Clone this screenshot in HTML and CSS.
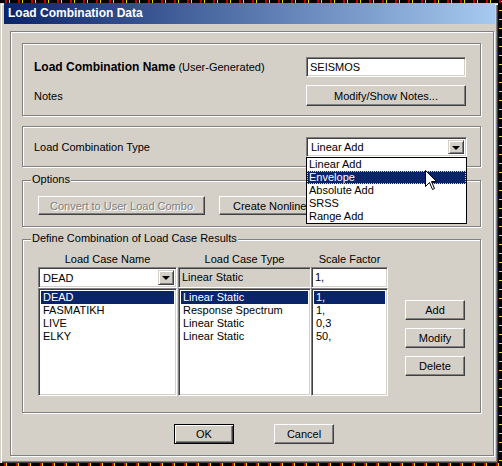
FILE: index.html
```html
<!DOCTYPE html>
<html lang="en">
<head>
  <meta charset="UTF-8" />
  <title>Load Combination Data</title>
  <link rel="stylesheet" href="styles.css">
</head>
<body>

  <div class="window">
    <div class="titlebar">Load Combination Data</div>

    <div class="frame">

      <!-- Nom et notes -->
      <div class="group group-name">
        <div class="row">
          <span><b class="big">Load Combination Name</b> (User-Generated)</span>
          <div class="textbox name-box">SEISMOS</div>
        </div>
        <div class="row row-notes">
          <span>Notes</span>
          <div class="btn notes-btn">Modify/Show Notes...</div>
        </div>
      </div>

      <!-- Type de combinaison (liste ouverte) -->
      <div class="group group-type">
        <span>Load Combination Type</span>
        <div class="combo type-combo">
          <span class="combo-text">Linear Add</span>
          <span class="combo-arrow"></span>
          <ul class="dropdown">
            <li>Linear Add</li>
            <li class="selected focus">Envelope</li>
            <li>Absolute Add</li>
            <li>SRSS</li>
            <li>Range Add</li>
            <svg class="cursor" width="12" height="20" viewBox="0 0 12 20">
              <path d="M0.5 0.5 L0.5 16.5 L4.5 12.5 L7.5 19.5 L9.5 18.5 L6.5 11.5 L11.5 11.5 Z" fill="#fff" stroke="#000" stroke-width="1"/>
            </svg>
          </ul>
        </div>
      </div>

      <!-- Options -->
      <div class="group group-options">
        <span class="legend">Options</span>
        <div class="btn wide-btn disabled">Convert to User Load Combo</div>
        <!-- la suite du texte est cachee par la liste ouverte -->
        <div class="btn wide-btn covered-btn">Create Nonline</div>
      </div>

      <!-- Cas de charge -->
      <div class="group group-define">
        <span class="legend">Define Combination of Load Case Results</span>

        <div class="col col-name">
          <div class="col-head">Load Case Name</div>
          <div class="combo case-combo">
            <span class="combo-text">DEAD</span>
            <span class="combo-arrow"></span>
          </div>
          <ul class="listbox">
            <li class="selected">DEAD</li>
            <li>FASMATIKH</li>
            <li>LIVE</li>
            <li>ELKY</li>
          </ul>
        </div>

        <div class="col col-type">
          <div class="col-head">Load Case Type</div>
          <div class="textbox readonly">Linear Static</div>
          <ul class="listbox">
            <li class="selected">Linear Static</li>
            <li>Response Spectrum</li>
            <li>Linear Static</li>
            <li>Linear Static</li>
          </ul>
        </div>

        <div class="col col-scale">
          <div class="col-head">Scale Factor</div>
          <div class="textbox">1,</div>
          <ul class="listbox">
            <li class="selected">1,</li>
            <li>1,</li>
            <li>0,3</li>
            <li>50,</li>
          </ul>
        </div>

        <div class="side-buttons">
          <div class="btn side-btn">Add</div>
          <div class="btn side-btn">Modify</div>
          <div class="btn side-btn">Delete</div>
        </div>
      </div>

      <!-- Boutons du bas -->
      <div class="footer">
        <div class="btn footer-btn default">OK</div>
        <div class="btn footer-btn">Cancel</div>
      </div>

    </div>
  </div>

</body>
</html>
```

FILE: styles.css
```css
/* Fond noir avec des points comme sur la capture */
body {
  margin: 0;
  width: 502px;
  height: 466px;
  overflow: hidden;
  font-family: "Liberation Sans", Arial, sans-serif;
  font-size: 11px;
  color: #000;
  background-color: #000;
  background-image:
    repeating-linear-gradient(90deg, transparent 0 5px, #c00000 5px 7px, transparent 7px 9px, #e8d800 9px 10px, transparent 10px 13px),
    repeating-linear-gradient(0deg, transparent 0 5px, #e8d800 5px 6px, transparent 6px 9px),
    repeating-linear-gradient(90deg, transparent 0 4px, #c00000 4px 6px, #e8d800 6px 7px, transparent 7px 12px);
  background-size: 100% 3px, 3px 100%, 100% 3px;
  background-position: 0 0, 499px 0, 0 463px;
  background-repeat: no-repeat;
}

ul {
  margin: 0;
  padding: 0;
  list-style: none;
}

.window {
  margin-top: 3px;
  width: 498px;
  height: 460px;
  box-sizing: border-box;
  padding: 0 3px 4px 4px;
  background: #d4d0c8;
  box-shadow: inset 1px 1px 0 #d4d0c8, inset 2px 2px 0 #fff, inset -1px -1px 0 #404040, inset -2px -2px 0 #808080;
}

.titlebar {
  height: 21px;
  line-height: 21px;
  padding-left: 4px;
  color: #fff;
  font-size: 12px;
  font-weight: bold;
  background: linear-gradient(90deg, #0a246a, #a6caf0);
}

/* Cadre grave (etched) */
.frame,
.group {
  border: 1px solid #808080;
  box-shadow: inset 1px 1px 0 #fff, 1px 1px 0 #fff;
}

.frame {
  width: 484px;
  height: 425px;
  box-sizing: border-box;
  margin: 7px 0 0 6px;
  padding: 11px 12px 11px 11px;
}

.group {
  position: relative;
}

.legend {
  position: absolute;
  top: -8px;
  left: 8px;
  padding: 0 1px;
  line-height: 13px;
  background: #d4d0c8;
}

.group-name {
  height: 73px;
  box-sizing: border-box;
  padding: 13px 14px 9px 11px;
}

.row {
  display: flex;
  justify-content: space-between;
  align-items: center;
  height: 20px;
}

.row-notes {
  height: 21px;
  margin-top: 8px;
}

.big {
  font-size: 12px;
}

.group-type {
  height: 41px;
  box-sizing: border-box;
  margin-top: 10px;
  padding: 10px 13px 9px 11px;
  display: flex;
  justify-content: space-between;
  align-items: center;
}

.group-options {
  height: 47px;
  box-sizing: border-box;
  margin-top: 13px;
  padding: 15px 0 0 15px;
  display: flex;
  gap: 14px;
}

.group-define {
  height: 174px;
  box-sizing: border-box;
  margin-top: 12px;
  padding: 13px 0 0 15px;
  display: flex;
}

/* Controles Windows classiques */
.btn {
  box-sizing: border-box;
  display: flex;
  align-items: center;
  justify-content: center;
  background: #d4d0c8;
  border: 1px solid;
  border-color: #fff #404040 #404040 #fff;
  box-shadow: inset -1px -1px 0 #808080;
}

.btn.default {
  border-color: #000;
  box-shadow: inset 1px 1px 0 #fff, inset -1px -1px 0 #404040, inset -2px -2px 0 #808080;
}

.btn.disabled {
  color: #808080;
  text-shadow: 1px 1px 0 #fff;
}

.covered-btn {
  justify-content: flex-start;
  padding-left: 13px;
  white-space: nowrap;
}

.textbox,
.combo,
.listbox {
  box-sizing: border-box;
  background: #fff;
  border: 1px solid;
  border-color: #808080 #fff #fff #808080;
  box-shadow: inset 1px 1px 0 #404040, inset -1px -1px 0 #d4d0c8;
}

.textbox {
  height: 21px;
  line-height: 17px;
  padding: 1px 3px;
}

.textbox.readonly {
  background: #d4d0c8;
}

.name-box {
  width: 160px;
  height: 20px;
  line-height: 16px;
}

.notes-btn {
  width: 160px;
  height: 21px;
}

.combo {
  position: relative;
  display: flex;
  align-items: center;
  padding: 2px;
}

.combo-text {
  flex: 1;
  padding-left: 2px;
}

.combo-arrow {
  width: 16px;
  height: 100%;
  box-sizing: border-box;
  display: flex;
  align-items: center;
  justify-content: center;
  background: #d4d0c8;
  border: 1px solid;
  border-color: #d4d0c8 #404040 #404040 #d4d0c8;
  box-shadow: inset 1px 1px 0 #fff, inset -1px -1px 0 #808080;
}

.combo-arrow::after {
  content: "";
  border-left: 4px solid transparent;
  border-right: 4px solid transparent;
  border-top: 4px solid #000;
  margin-top: 1px;
}

.type-combo {
  width: 161px;
  height: 20px;
}

/* Liste deroulante ouverte */
.dropdown {
  position: absolute;
  top: 19px;
  left: -1px;
  z-index: 10;
  width: 161px;
  box-sizing: border-box;
  background: #fff;
  border: 1px solid #000;
}

.dropdown li {
  height: 13px;
  line-height: 13px;
  padding-left: 2px;
}

.selected {
  background: #0a246a;
  color: #fff;
}

.focus {
  outline: 1px dotted #d4d0c8;
  outline-offset: -1px;
}

.cursor {
  position: absolute;
  left: 118px;
  top: 12px;
}

.wide-btn {
  width: 167px;
  height: 19px;
}

/* Colonnes des cas de charge */
.col {
  display: flex;
  flex-direction: column;
}

.col-name {
  width: 139px;
  margin-right: 1px;
}

.col-type {
  width: 133px;
}

.col-scale {
  width: 77px;
}

.col-head {
  height: 14px;
  line-height: 12px;
  text-align: center;
}

.case-combo,
.col .textbox {
  height: 21px;
}

.listbox {
  height: 108px;
  padding: 2px;
}

.listbox li {
  height: 13px;
  line-height: 13px;
  padding-left: 2px;
}

.side-buttons {
  display: flex;
  flex-direction: column;
  gap: 8px;
  margin: 47px 0 0 17px;
}

.side-btn {
  width: 60px;
  height: 20px;
}

.footer {
  display: flex;
  gap: 40px;
  margin-top: 11px;
  padding-left: 152px;
}

.footer-btn {
  width: 60px;
  height: 20px;
}
```
